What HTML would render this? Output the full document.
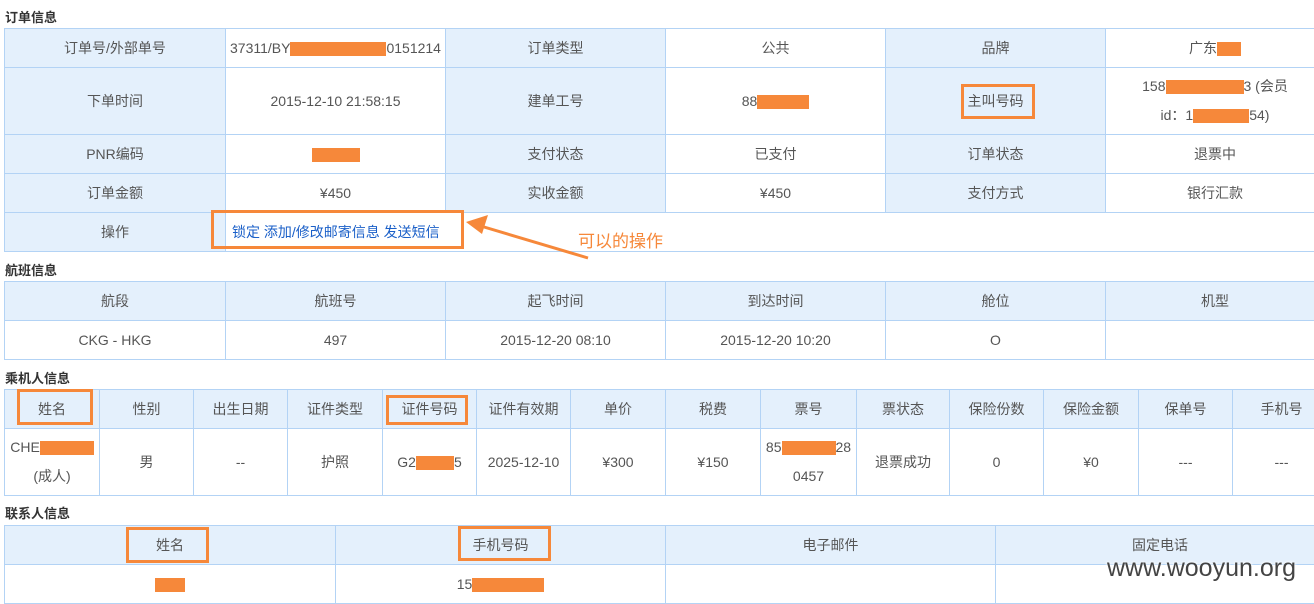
<!DOCTYPE html>
<html><head><meta charset="utf-8"><style>
body{margin:0;width:1314px;height:599px;overflow:hidden;background:#fff;font-family:"Liberation Sans","Noto Sans CJK SC",sans-serif;color:#555;font-size:14px;position:relative}
.t{position:absolute;left:5px;font-weight:bold;font-size:13px;color:#333}
table{position:absolute;left:4px;border-collapse:collapse;table-layout:fixed}
td{border:1px solid #b3d3f5;text-align:center;padding:0;line-height:22px}
.tall td{line-height:29px}
.b{background:#e4f0fc}
.r{display:inline-block;background:#f6883a;height:14px;vertical-align:middle}
.box{position:absolute;border:3px solid #f6883a;box-sizing:border-box}
a{color:#1a5fc8;text-decoration:none}
</style></head><body>
<div class="t" style="top:7px">订单信息</div>
<table style="top:28px;width:1320px">
<colgroup><col style="width:221px"><col style="width:220px"><col style="width:220px"><col style="width:220px"><col style="width:220px"><col style="width:219px"></colgroup>
<tr style="height:39px"><td class="b">订单号/外部单号</td><td>37311/BY<span class="r" style="width:96px"></span>0151214</td><td class="b">订单类型</td><td>公共</td><td class="b">品牌</td><td>广东<span class="r" style="width:24px"></span></td></tr>
<tr style="height:67px" class="tall"><td class="b">下单时间</td><td>2015-12-10 21:58:15</td><td class="b">建单工号</td><td>88<span class="r" style="width:52px"></span></td><td class="b">主叫号码</td><td>158<span class="r" style="width:78px"></span>3 (会员<br>id：1<span class="r" style="width:56px"></span>54)</td></tr>
<tr style="height:39px"><td class="b">PNR编码</td><td><span class="r" style="width:48px"></span></td><td class="b">支付状态</td><td>已支付</td><td class="b">订单状态</td><td>退票中</td></tr>
<tr style="height:39px"><td class="b">订单金额</td><td>¥450</td><td class="b">实收金额</td><td>¥450</td><td class="b">支付方式</td><td>银行汇款</td></tr>
<tr style="height:39px"><td class="b">操作</td><td colspan="5" style="text-align:left;padding-left:6px"><a>锁定 添加/修改邮寄信息 发送短信</a></td></tr>
</table>
<div class="box" style="left:211px;top:210px;width:253px;height:39px"></div>
<div class="box" style="left:961px;top:84px;width:74px;height:35px"></div>
<svg style="position:absolute;left:460px;top:212px" width="140" height="52"><line x1="14" y1="12" x2="128" y2="46" stroke="#f6883a" stroke-width="3"/><polygon points="6,10 28,3 22,22" fill="#f6883a"/></svg>
<div style="position:absolute;left:578px;top:227px;color:#f6883a;font-size:17px">可以的操作</div>
<div class="t" style="top:260px">航班信息</div>
<table style="top:281px;width:1320px">
<colgroup><col style="width:221px"><col style="width:220px"><col style="width:220px"><col style="width:220px"><col style="width:220px"><col style="width:219px"></colgroup>
<tr style="height:39px" class="b"><td>航段</td><td>航班号</td><td>起飞时间</td><td>到达时间</td><td>舱位</td><td>机型</td></tr>
<tr style="height:39px"><td>CKG - HKG</td><td>497</td><td>2015-12-20 08:10</td><td>2015-12-20 10:20</td><td>O</td><td></td></tr>
</table>
<div class="t" style="top:368px">乘机人信息</div>
<table style="top:389px;width:1326px">
<colgroup><col style="width:95px"><col style="width:94px"><col style="width:94px"><col style="width:95px"><col style="width:94px"><col style="width:94px"><col style="width:95px"><col style="width:95px"><col style="width:96px"><col style="width:93px"><col style="width:94px"><col style="width:95px"><col style="width:94px"><col style="width:98px"></colgroup>
<tr style="height:39px" class="b"><td>姓名</td><td>性别</td><td>出生日期</td><td>证件类型</td><td>证件号码</td><td>证件有效期</td><td>单价</td><td>税费</td><td>票号</td><td>票状态</td><td>保险份数</td><td>保险金额</td><td>保单号</td><td>手机号</td></tr>
<tr style="height:67px" class="tall"><td>CHE<span class="r" style="width:54px"></span><br>(成人)</td><td>男</td><td>--</td><td>护照</td><td>G2<span class="r" style="width:38px"></span>5</td><td>2025-12-10</td><td>¥300</td><td>¥150</td><td>85<span class="r" style="width:54px"></span>28<br>0457</td><td>退票成功</td><td>0</td><td>¥0</td><td>---</td><td>---</td></tr>
</table>
<div class="box" style="left:17px;top:389px;width:76px;height:36px"></div>
<div class="box" style="left:386px;top:395px;width:82px;height:30px"></div>
<div class="t" style="top:503px">联系人信息</div>
<table style="top:525px;width:1320px">
<colgroup><col style="width:331px"><col style="width:330px"><col style="width:330px"><col style="width:329px"></colgroup>
<tr style="height:39px" class="b"><td>姓名</td><td>手机号码</td><td>电子邮件</td><td>固定电话</td></tr>
<tr style="height:39px"><td><span class="r" style="width:30px"></span></td><td>15<span class="r" style="width:72px"></span></td><td></td><td></td></tr>
</table>
<div class="box" style="left:126px;top:527px;width:83px;height:36px"></div>
<div class="box" style="left:458px;top:526px;width:93px;height:35px"></div>
<div style="position:absolute;left:1107px;top:554px;font-size:25px;color:#444;text-shadow:0 0 3px #fff,0 0 3px #fff">www.wooyun.org</div>
</body></html>
